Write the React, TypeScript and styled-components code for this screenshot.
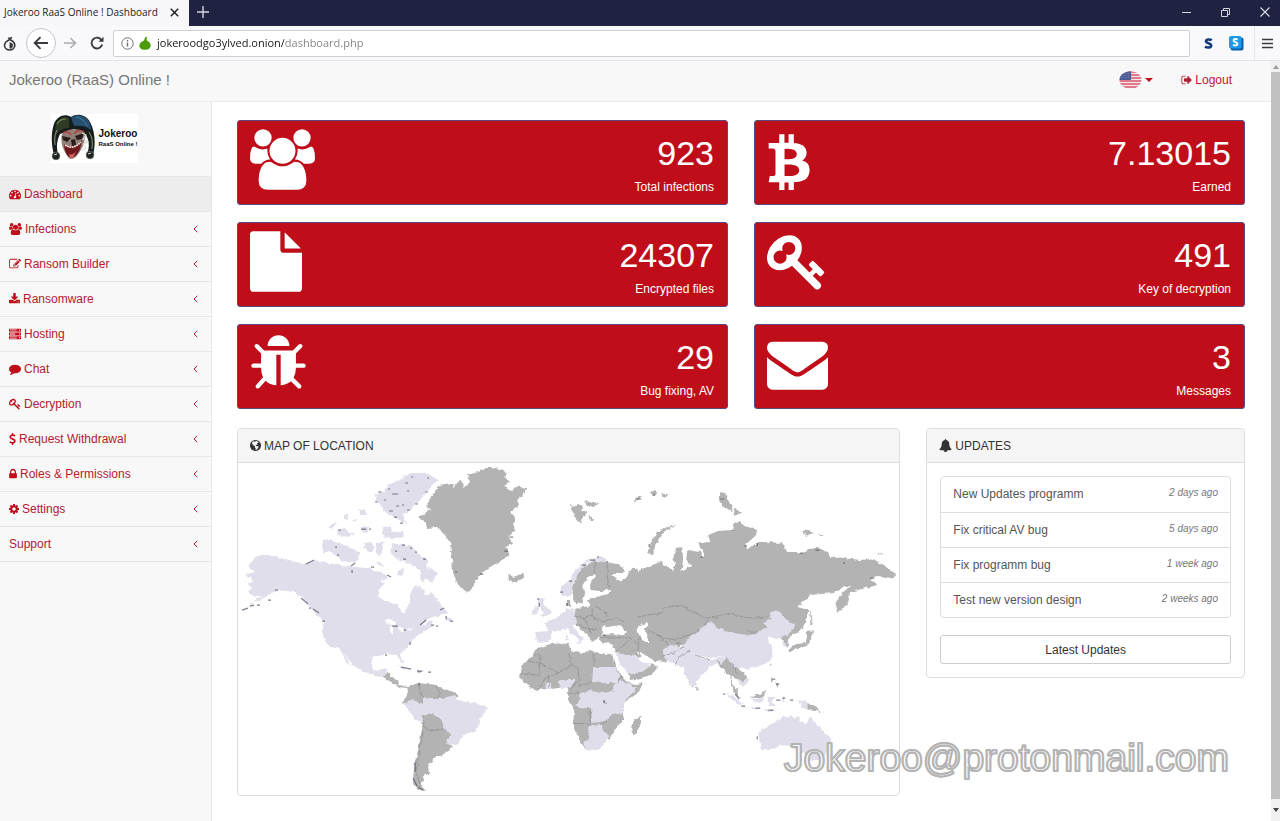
import React from "react";
import styled, { createGlobalStyle } from "styled-components";

const RED = "#bf0d1a";
const LINK = "#b3202f";

const GlobalStyle = createGlobalStyle`
  *, *::before, *::after { box-sizing: border-box; }
  body {
    margin: 0;
    background: #fff;
    color: #333;
    font-family: "Liberation Sans", Arial, sans-serif;
    font-size: 12px;
    line-height: 18px;
  }
  a { text-decoration: none; color: inherit; }
  button, input { font: inherit; }
  ul { list-style: none; margin: 0; padding: 0; }
  h1, h2, p { margin: 0; font-weight: 400; }
`;

/* ---------- icons ---------- */

type Glyph = { x?: number; w: number; d: string };

const glyphs: Record<string, Glyph> = {
  users: {
    x: 64,
    w: 1920,
    d: "M657 896q-162 5-265 128h-134q-82 0-138-40.5t-56-118.5q0-353 124-353 6 0 43.5 21t97.5 42.5 119 21.5q67 0 133-23-5 37-5 66 0 139 81 256zm1071 637q0 120-73 189.5t-194 69.5h-874q-121 0-194-69.5t-73-189.5q0-53 3.5-103.5t14-109 26.5-108.5 43-97.5 62-81 85.5-53.5 111.5-20q10 0 43 21.5t73 48 107 48 135 21.5 135-21.5 107-48 73-48 43-21.5q61 0 111.5 20t85.5 53.5 62 81 43 97.5 26.5 108.5 14 109 3.5 103.5zm-1024-1277q0 106-75 181t-181 75-181-75-75-181 75-181 181-75 181 75 75 181zm704 384q0 159-112.5 271.5t-271.5 112.5-271.5-112.5-112.5-271.5 112.5-271.5 271.5-112.5 271.5 112.5 112.5 271.5zm576 225q0 78-56 118.5t-138 40.5h-134q-103-123-265-128 81-117 81-256 0-29-5-66 66 23 133 23 59 0 119-21.5t97.5-42.5 43.5-21q124 0 124 353zm-128-609q0 106-75 181t-181 75-181-75-75-181 75-181 181-75 181 75 75 181z",
  },
  bitcoin: {
    x: 256,
    w: 1280,
    d: "M1410 669q18 182-131 258 117 28 175 103t45 214q-7 71-32.5 125t-64.5 89-97 58.5-121.5 34.5-145.5 15v255h-154v-251q-80 0-122-1v252h-154v-255q-18 0-54-.5t-55-.5h-200l31-183h111q50 0 58-51v-402h16q-6-1-16-1v-287q-13-68-89-68h-111v-164l212 1q64 0 97-1v-252h154v247q82-2 122-2v-245h154v252q79 7 140 22.5t113 45 82.5 78 36.5 114.5zm-215 545q0-36-15-64t-37-46-57.5-30.5-65.5-18.5-74-9-69-3-64.5 1-47.5 1v338q8 0 37 .5t48 .5 53-1.5 58.5-4 57-8.5 55.5-14 47.5-21 39.5-30 24.5-40 9.5-51zm-71-476q0-33-12.5-58.5t-30.5-42-48-28-55-16.5-61.5-8-58-2.5-54 1-39.5.5v307q5 0 34.5.5t46.5 0 50-2 55-5.5 51.5-11 48.5-18.5 37-27 27-38.5 9-51z",
  },
  file: {
    x: 128,
    w: 1536,
    d: "M1152 512v-472q22 14 36 28l408 408q14 14 28 36h-472zm-128 32q0 40 28 68t68 28h544v1056q0 40-28 68t-68 28h-1344q-40 0-68-28t-28-68v-1600q0-40 28-68t68-28h800v544z",
  },
  key: {
    w: 1792,
    d: "M832 512q0-80-56-136t-136-56-136 56-56 136q0 42 19 83-41-19-83-19-80 0-136 56t-56 136 56 136 136 56 136-56 56-136q0-42-19-83 41 19 83 19 80 0 136-56t56-136zm851 704q0 17-49 66t-66 49q-9 0-28.5-16t-36.5-33-38.5-40-24.5-26l-96 96 220 220q28 28 28 68 0 42-39 81t-81 39q-40 0-68-28l-671-671q-176 131-365 131-163 0-265.5-102.5t-102.5-265.5q0-160 95-313t248-248 313-95q163 0 265.5 102.5t102.5 265.5q0 189-131 365l355 355 96-96q-3-3-26-24.5t-40-38.5-33-36.5-16-28.5q0-17 49-66t66-49q13 0 23 10 6 6 46 44.5t82 79.5 86.5 86 73 78 28.5 41z",
  },
  bug: {
    x: 64,
    w: 1664,
    d: "M1696 960q0 26-19 45t-45 19h-224q0 171-67 290l208 209q19 19 19 45t-19 45q-18 19-45 19t-45-19l-198-197q-5 5-15 13t-42 28.5-65 36.5-82 29-97 13v-896h-128v896q-51 0-101.5-13.5t-87-33-66-39-43.500-32.500l-15-14-183 207q-20 21-48 21-24 0-43-16-19-18-20.500-44.500t15.500-46.500l202-227q-58-114-58-274h-224q-26 0-45-19t-19-45 19-45 45-19h224v-294l-173-173q-19-19-19-45t19-45 45-19 45 19l173 173h844l173-173q19-19 45-19t45 19 19 45-19 45l-173 173v294h224q26 0 45 19t19 45zm-480-576h-640q0-133 93.500-226.500t226.500-93.500 226.500 93.500 93.500 226.500z",
  },
  envelope: {
    w: 1792,
    d: "M1792 710v794q0 66-47 113t-113 47h-1472q-66 0-113-47t-47-113v-794q44 49 101 87 362 246 497 345 57 42 92.5 65.5t94.5 48 110 24.5h2q51 0 110-24.5t94.5-48 92.5-65.5q170-123 498-345 57-39 100-87zm0-294q0 79-49 151t-122 123q-376 261-468 325-10 7-42.5 31t-54 38-52 32.5-57.5 27-50 9h-2q-23 0-50-9t-57.5-27-52-32.5-54-38-42.5-31q-91-64-262-182.5t-205-142.5q-62-42-117-115.5t-55-136.5q0-78 41.5-130t118.5-52h1472q65 0 112.5 47t47.5 113z",
  },
  dashboard: {
    w: 1792,
    d: "M384 1152q0-53-37.5-90.5t-90.5-37.5-90.5 37.5-37.5 90.5 37.5 90.5 90.5 37.5 90.5-37.5 37.5-90.5zm192-448q0-53-37.5-90.5t-90.5-37.5-90.5 37.5-37.5 90.5 37.5 90.5 90.5 37.5 90.5-37.5 37.5-90.5zm428 481l101-382q6-26-7.5-48.5t-38.5-29.5-48 6.5-30 39.5l-101 382q-60 5-107 43.5t-63 98.5q-20 77 20 146t117 89 146-20 89-117q16-60-6-117t-72-91zm660-33q0-53-37.5-90.5t-90.5-37.5-90.5 37.5-37.5 90.5 37.5 90.5 90.5 37.5 90.5-37.5 37.5-90.5zm-640-640q0-53-37.5-90.5t-90.5-37.5-90.5 37.5-37.5 90.5 37.5 90.5 90.5 37.5 90.5-37.5 37.5-90.5zm448 192q0-53-37.5-90.5t-90.5-37.5-90.5 37.5-37.5 90.5 37.5 90.5 90.5 37.5 90.5-37.5 37.5-90.5zm320 448q0 261-141 483-19 29-54 29h-1402q-35 0-54-29-141-221-141-483 0-182 71-348t191-286 286-191 348-71 348 71 286 191 191 286 71 348z",
  },
  edit: {
    w: 1792,
    d: "M888 1184l116-116-152-152-116 116v56h96v96h56zm440-720q-16-16-33 1l-350 350q-17 17-1 33t33-1l350-350q17-17 1-33zm80 594v190q0 119-84.5 203.5t-203.5 84.5h-832q-119 0-203.5-84.5t-84.5-203.5v-832q0-119 84.5-203.5t203.5-84.5h832q63 0 117 25 15 7 18 23 3 17-9 29l-49 49q-14 14-32 8-23-6-45-6h-832q-66 0-113 47t-47 113v832q0 66 47 113t113 47h832q66 0 113-47t47-113v-126q0-13 9-22l64-64q15-15 35-7t20 29zm-96-738l288 288-672 672h-288v-288zm444 132l-92 92-288-288 92-92q28-28 68-28t68 28l152 152q28 28 28 68t-28 68z",
  },
  download: {
    x: 64,
    w: 1664,
    d: "M1344 1344q0-26-19-45t-45-19-45 19-19 45 19 45 45 19 45-19 19-45zm256 0q0-26-19-45t-45-19-45 19-19 45 19 45 45 19 45-19 19-45zm128-224v320q0 40-28 68t-68 28h-1472q-40 0-68-28t-28-68v-320q0-40 28-68t68-28h465l135 136q58 56 136 56t136-56l136-136h464q40 0 68 28t28 68zm-325-569q17 41-14 70l-448 448q-18 19-45 19t-45-19l-448-448q-31-29-14-70 17-39 59-39h256v-448q0-26 19-45t45-19h256q26 0 45 19t19 45v448h256q42 0 59 39z",
  },
  server: {
    w: 1792,
    d: "M0 128h1792v448h-1792zM128 224v80h1024v-80zM128 400v80h1024v-80zM1500 270v160h160v-160zM0 672h1792v448h-1792zM128 768v80h800v-80zM128 944v80h800v-80zM1500 814v160h160v-160zM0 1216h1792v448h-1792zM128 1312v80h1024v-80zM128 1488v80h1024v-80zM1500 1358v160h160v-160z",
  },
  comment: {
    w: 1792,
    d: "M1792 896q0 174-120 321.5t-326 233-450 85.5q-70 0-145-8-198 175-460 242-49 14-114 22-17 2-30.5-9t-17.5-29v-1q-3-4-.5-12t2-10 4.5-9.5l6-9 7-8.5 8-9q7-8 31-34.5t34.5-38 31-39.5 32.5-51 27-59 26-76q-157-89-247.5-220t-90.5-281q0-130 71-248.5t191-204.5 286-136.5 348-50.5q244 0 450 85.5t326 233 120 321.5z",
  },
  dollar: {
    w: 1024,
    d: "M978 1185q0 153-99.5 263.5t-258.5 136.5v175q0 14-9 23t-23 9h-135q-13 0-22.5-9.5t-9.5-22.5v-175q-66-9-127.5-31t-101.5-44.5-74-48-46.5-37.5-17.5-18q-17-21-2-41l103-135q7-10 23-12 15-2 24 9l2 2q113 99 243 125 37 8 74 8 81 0 142.5-43t61.5-122q0-28-15-53t-33.5-42-58.5-37.5-66-32-80-32.5q-39-16-61.5-25t-61.5-26.5-62.5-31-56.5-35.5-53.5-42.5-43.5-49-35.5-58-21-66.5-8.5-78q0-138 98-242t255-134v-180q0-13 9.5-22.5t22.5-9.5h135q14 0 23 9t9 23v176q57 6 110.5 23t87 33.5 63.5 37.5 39 29 15 14q17 18 5 38l-81 146q-8 15-23 16-14 3-27-7-3-3-14.5-12t-39-26.5-58.5-32-74.5-26-85.5-11.5q-95 0-155 43t-60 111q0 26 8.5 48t29.5 41.5 39.5 33 56 31 60.5 27 70 27.5q53 20 81 31.5t76 35 75.5 42.5 62 50 53 63.5 31.5 76.5 13 94z",
  },
  lock: {
    w: 1152,
    d: "M320 768h512v-192q0-106-75-181t-181-75-181 75-75 181v192zm832 96v576q0 40-28 68t-68 28h-960q-40 0-68-28t-28-68v-576q0-40 28-68t68-28h32v-192q0-184 132-316t316-132 316 132 132 316v192h32q40 0 68 28t28 68z",
  },
  cog: {
    x: 128,
    w: 1536,
    d: "M1152 896q0-106-75-181t-181-75-181 75-75 181 75 181 181 75 181-75 75-181zm512-109v222q0 12-8 23t-20 13l-185 28q-19 54-39 91 35 50 107 138 10 12 10 25t-9 23q-27 37-99 108t-94 71q-12 0-26-9l-138-108q-44 23-91 38-16 136-29 186-7 28-36 28h-222q-14 0-24.5-8.5t-11.5-21.5l-28-184q-49-16-90-37l-141 107q-10 9-25 9-14 0-25-11-126-114-165-168-7-10-7-23 0-12 8-23 15-21 51-66.5t54-70.5q-27-50-41-99l-183-27q-13-2-21-12.5t-8-23.5v-222q0-12 8-23t19-13l186-28q14-46 39-92-40-57-107-138-10-12-10-24 0-10 9-23 26-36 98.5-107.5t94.5-71.5q13 0 26 10l138 107q44-23 91-38 16-136 29-186 7-28 36-28h222q14 0 24.5 8.5t11.5 21.5l28 184q49 16 90 37l142-107q9-9 24-9 13 0 25 10 129 119 165 170 7 8 7 22 0 12-8 23-15 21-51 66.5t-54 70.5q26 50 41 98l183 28q13 2 21 12.5t8 23.5z",
  },
  signOut: {
    w: 1664,
    d: "M704 1440q0 4 1 20t.5 26.5-3 23.5-10 19.5-20.5 6.5h-320q-119 0-203.5-84.5t-84.5-203.5v-704q0-119 84.5-203.5t203.5-84.5h320q13 0 22.5 9.5t9.5 22.5q0 4 1 20t.5 26.5-3 23.5-10 19.5-20.5 6.5h-320q-66 0-113 47t-47 113v704q0 66 47 113t113 47h312l11.5 1 11.5 3 8 5.5 7 9 2 13.5zm928-544q0 26-19 45l-544 544q-19 19-45 19t-45-19-19-45v-288h-448q-26 0-45-19t-19-45v-384q0-26 19-45t45-19h448v-288q0-26 19-45t45-19 45 19l544 544q19 19 19 45z",
  },
  bell: {
    w: 1792,
    d: "M912 1696q0-16-16-16-59 0-101.5-42.5t-42.5-101.5q0-16-16-16t-16 16q0 73 51.5 124.5t124.5 51.5q16 0 16-16zm816-288q0 52-38 90t-90 38h-448q0 106-75 181t-181 75-181-75-75-181h-448q-52 0-90-38t-38-90q50-42 91-88t85-119.5 74.5-158.5 50-206 19.5-260q0-152 117-282.5t307-158.5q-8-19-8-39 0-40 28-68t68-28 68 28 28 68q0 20-8 39 190 28 307 158.5t117 282.5q0 139 19.5 260t50 206 74.5 158.5 85 119.5 91 88z",
  },
  globe: {
    w: 1536,
    d: "M768 128a768 768 0 1 0 .1 0zM880 270q230 50 340 230l-90 60-120-30-70 90 110 40-40 130-170 20-60 130 180 60 170-30 70 80-90 230-140 160q-120 40-220 30l60-180-130-120 20-160-150-90-210-190-60-200q40-120 140-200l120-40 60 70 130-20z",
  },
};

const GlyphSvg = styled.svg`
  display: block;
  flex: none;
  fill: currentColor;
`;

function Icon({ name, size }: { name: string; size: number }) {
  const g = glyphs[name];
  return (
    <GlyphSvg
      viewBox={`${g.x ?? 0} 0 ${g.w} 1792`}
      height={size}
      width={Math.round((g.w / 1792) * size)}
      fillRule="evenodd"
      aria-hidden="true"
    >
      <path d={g.d} />
    </GlyphSvg>
  );
}

/* ---------- browser chrome ---------- */

const Shell = styled.div`
  display: flex;
  flex-direction: column;
  min-height: 100vh;
`;

const TabStrip = styled.div`
  display: flex;
  align-items: stretch;
  height: 26px;
  background: #1f2240;
  color: #d5d6de;
`;

const Tab = styled.div`
  display: flex;
  align-items: center;
  justify-content: space-between;
  width: 189px;
  padding: 0 9px 2px 4px;
  background: #f7f7fa;
  color: #1c1c22;
  font-family: "Open Sans", sans-serif;
  font-size: 10px;
  white-space: nowrap;
`;

const ChromeButton = styled.button<{ $w?: number }>`
  display: flex;
  align-items: center;
  justify-content: center;
  width: ${(p) => p.$w ?? 28}px;
  padding: 0;
  border: 0;
  background: none;
  color: inherit;
`;

const TabStripButton = styled(ChromeButton)`
  padding-bottom: 2px;
`;

const WindowButtons = styled.div`
  display: flex;
  gap: 8px;
  margin-left: auto;
`;

const Stroke = styled.svg`
  display: block;
  flex: none;
  fill: none;
  stroke: currentColor;
`;

const Toolbar = styled.div`
  display: flex;
  align-items: center;
  height: 35px;
  border-bottom: 1px solid #e3e3e8;
  background: #f9f9fb;
  color: #3a3a40;
`;

const BackButton = styled(ChromeButton)`
  height: 30px;
  margin-left: 6px;
  border: 1px solid #c5c5c9;
  border-radius: 50%;
  background: #fff;
`;

const AddressBar = styled.div`
  display: flex;
  flex: 1;
  align-items: center;
  gap: 5px;
  height: 27px;
  margin: 0 4px 0 2px;
  padding: 0 7px;
  border: 1px solid #cfcfd4;
  border-radius: 2px;
  background: #fff;
`;

const AddressInput = styled.input`
  flex: 1;
  min-width: 0;
  padding: 0 0 0 1px;
  border: 0;
  outline: 0;
  background: linear-gradient(90deg, #15151a 128px, #808086 128px);
  -webkit-background-clip: text;
  background-clip: text;
  color: transparent;
  font-family: "Open Sans", sans-serif;
  font-size: 11px;
  line-height: 18px;
`;

const ToolbarEnd = styled.div`
  display: flex;
  align-items: center;
  align-self: stretch;
`;

const MenuDivider = styled.span`
  align-self: stretch;
  width: 1px;
  margin-left: 4px;
  background: #e6e6ea;
`;

function BrowserChrome() {
  return (
    <>
      <TabStrip>
        <Tab>
          Jokeroo RaaS Online ! Dashboard
          <ChromeButton $w={12} aria-label="Close tab">
            <Stroke width="9" height="9" viewBox="0 0 9 9" strokeWidth="1.4">
              <path d="M.8.8l7.4 7.4M8.2.8L.8 8.2" />
            </Stroke>
          </ChromeButton>
        </Tab>
        <TabStripButton aria-label="New tab">
          <Stroke width="12" height="12" viewBox="0 0 12 12" strokeWidth="1.4">
            <path d="M6 0v12M0 6h12" />
          </Stroke>
        </TabStripButton>
        <WindowButtons>
          <TabStripButton $w={31} aria-label="Minimize">
            <Stroke width="9" height="9" viewBox="0 0 9 9">
              <path d="M0 4.5h9" />
            </Stroke>
          </TabStripButton>
          <TabStripButton $w={31} aria-label="Restore">
            <Stroke width="9" height="9" viewBox="0 0 9 9">
              <path d="M.5 2.5h6v6h-6zM2.5 2.5v-2h6v6h-2" />
            </Stroke>
          </TabStripButton>
          <TabStripButton $w={31} aria-label="Close window">
            <Stroke width="10" height="10" viewBox="0 0 10 10" strokeWidth="1.2">
              <path d="M.5.5l9 9M9.5.5l-9 9" />
            </Stroke>
          </TabStripButton>
        </WindowButtons>
      </TabStrip>
      <Toolbar>
        <ChromeButton $w={20} aria-label="Onion circuit">
          <Stroke width="14" height="15" viewBox="0 0 14 15" strokeWidth="1.7">
            <path d="M5.500 1.500l1.300 2C3.500 5 1.500 6.600 1.500 9.300c0 2.700 2.300 4.700 5.100 4.700s5.200-2 5.200-4.700c0-2.700-2-4.300-4.600-5.600L8.500 1" />
            <path d="M6.800 6.500v5.800c2.200 0 3-1.300 3-2.900s-1-2.400-3-2.900z" fill="currentColor" strokeWidth=".5" />
          </Stroke>
        </ChromeButton>
        <BackButton $w={30} aria-label="Back">
          <Stroke width="16" height="14" viewBox="0 0 16 14" strokeWidth="1.9">
            <path d="M15 7H2M7.500 1.200L1.700 7l5.800 5.800" />
          </Stroke>
        </BackButton>
        <ChromeButton $w={27} disabled aria-label="Forward">
          <Stroke width="14" height="14" viewBox="0 0 16 14" strokeWidth="1.7" opacity=".4">
            <path d="M1 7h13M8.500 1.200L14.300 7l-5.800 5.800" />
          </Stroke>
        </ChromeButton>
        <ChromeButton $w={28} aria-label="Reload">
          <Stroke width="14" height="14" viewBox="0 0 14 14" strokeWidth="1.9">
            <path d="M11.900 4.800A5.400 5.400 0 1 0 12.200 8.500" />
            <path d="M13.500.8v5h-5z" fill="currentColor" stroke="none" />
          </Stroke>
        </ChromeButton>
        <AddressBar>
          <Stroke width="13" height="13" viewBox="0 0 13 13" color="#6f6f75">
            <circle cx="6.500" cy="6.500" r="5.700" />
            <path d="M6.500 5.500v4M6.500 3v1.400" strokeWidth="1.400" />
          </Stroke>
          <svg width="12" height="13" viewBox="0 0 12 13" fill="#4a9a0a">
            <path d="M6.200.3L8 0 7.500 3.200C10 4.500 11.700 6.300 11.700 8.500c0 2.800-2.500 4.300-5.700 4.300S.3 11.300.3 8.500C.3 6.200 2.500 4.800 5 3.500z" />
          </svg>
          <AddressInput aria-label="Address" defaultValue="jokeroodgo3ylved.onion/dashboard.php" />
        </AddressBar>
        <ToolbarEnd>
          <ChromeButton aria-label="NoScript">
            <svg width="9" height="11" viewBox="0 0 9 11" fill="none" stroke="#123a7d" strokeWidth="2.600">
              <path d="M7.800 2.200C6.500 1.300 2 .8 2 3.300c0 2.300 5.200 1.500 5.200 4.200 0 2.600-4.500 2.300-6.200 1.200" />
            </svg>
          </ChromeButton>
          <ChromeButton aria-label="HTTPS Everywhere">
            <svg width="15" height="15" viewBox="0 0 15 15">
              <rect x="1.500" y="1.500" width="13" height="13" rx="2" fill="#0d5fae" />
              <rect width="12.500" height="12.500" rx="2" fill="#1b9bea" />
              <path d="M8.700 3.500C7.500 2.800 4.500 2.600 4.500 4.500s4 1.300 4 3.300-3 1.900-4.400 1.100" fill="none" stroke="#fff" strokeWidth="1.900" />
            </svg>
          </ChromeButton>
          <MenuDivider />
          <ChromeButton $w={25} aria-label="Open menu">
            <Stroke width="11" height="11" viewBox="0 0 11 11" strokeWidth="1.600">
              <path d="M0 1.500h11M0 5.500h11M0 9.500h11" />
            </Stroke>
          </ChromeButton>
        </ToolbarEnd>
      </Toolbar>
    </>
  );
}

/* ---------- page frame ---------- */

const Viewport = styled.div`
  display: flex;
  flex: 1;
`;

const Page = styled.div`
  position: relative;
  display: flex;
  flex: 1;
  flex-direction: column;
  min-width: 0;
`;

const ScrollTrack = styled.div`
  display: flex;
  flex-direction: column;
  width: 9px;
  background: #f1f1f1;
`;

const ScrollArrow = styled.span<{ $down?: boolean }>`
  display: flex;
  align-items: center;
  justify-content: center;
  height: ${(p) => (p.$down ? 22 : 11)}px;

  &::before {
    content: "";
    border: 3px solid transparent;
    border-top-width: ${(p) => (p.$down ? 4 : 0)}px;
    border-bottom-width: ${(p) => (p.$down ? 0 : 4)}px;
    border-top-color: #444;
    border-bottom-color: #9a9a9a;
  }
`;

const ScrollThumb = styled.span`
  flex: 1;
  background: #c1c1c1;
`;

const Header = styled.header`
  display: flex;
  align-items: center;
  height: 41px;
  padding: 0 39px 2px 9px;
  border-bottom: 1px solid #e9e9e9;
  background: #f8f8f8;
`;

const Brand = styled.a`
  margin-right: auto;
  color: #777;
  font-size: 15px;
`;

const HeaderLinks = styled.nav`
  display: flex;
  align-items: center;
  gap: 28px;
  color: ${LINK};
`;

const LanguageButton = styled.button`
  display: flex;
  align-items: center;
  gap: 3px;
  padding: 0;
  border: 0;
  background: none;
`;

const Caret = styled.span`
  border: 4px solid transparent;
  border-top-color: ${RED};
  border-bottom: 0;
`;

const IconLink = styled.a`
  display: flex;
  align-items: center;
  gap: 3px;
`;

const Columns = styled.div`
  display: flex;
  flex: 1;
`;

const Sidebar = styled.aside`
  width: 212px;
  flex: none;
  border-right: 1px solid #e7e7e7;
  background: #f8f8f8;
`;

const LogoBox = styled.div`
  display: flex;
  align-items: flex-start;
  justify-content: center;
  height: 75px;
  padding: 12px 22px 0 0;
  border-bottom: 1px solid #e7e7e7;
`;

const Logo = styled.a`
  display: flex;
  align-items: center;
  gap: 2px;
  height: 49px;
  background: #fff;
  color: #111;
`;

const LogoText = styled.span`
  display: flex;
  flex-direction: column;
  align-items: center;
  font-weight: 700;
`;

const LogoName = styled.span`
  font-size: 10px;
  line-height: 12px;
`;

const LogoTag = styled.span`
  font-size: 6px;
  line-height: 9px;
`;

const NavLink = styled.a<{ $active?: boolean }>`
  display: flex;
  align-items: center;
  gap: 3px;
  height: 35px;
  padding: 0 13px 0 9px;
  border-bottom: 1px solid #e7e7e7;
  background: ${(p) => (p.$active ? "#ededed" : "transparent")};
  color: ${LINK};

  & > svg:first-child { color: ${RED}; }
`;

const Chevron = styled(Stroke)`
  margin-left: auto;
`;

const navItems = [
  { label: "Dashboard", icon: "dashboard", active: true },
  { label: "Infections", icon: "users" },
  { label: "Ransom Builder", icon: "edit" },
  { label: "Ransomware", icon: "download" },
  { label: "Hosting", icon: "server" },
  { label: "Chat", icon: "comment" },
  { label: "Decryption", icon: "key" },
  { label: "Request Withdrawal", icon: "dollar" },
  { label: "Roles & Permissions", icon: "lock" },
  { label: "Settings", icon: "cog" },
  { label: "Support" },
];

function Flag() {
  return (
    <svg width="23" height="18" viewBox="0 0 23 18" role="img" aria-label="English">
      <clipPath id="flag-oval">
        <ellipse cx="11.500" cy="9" rx="11" ry="8.800" />
      </clipPath>
      <g clipPath="url(#flag-oval)">
        <rect width="23" height="18" fill="#f6e6ea" />
        <path d="M0 1h23M0 4h23M0 7h23M0 10h23M0 13h23M0 16h23" stroke="#d6566c" strokeWidth="1.500" />
        <rect width="12" height="9" fill="#4a5a96" />
        <path d="M2 2.500h9M2 4.500h9M2 6.500h9" stroke="#8c98c2" strokeWidth=".7" strokeDasharray="1 1.300" />
      </g>
    </svg>
  );
}

function Jester() {
  return (
    <svg width="45" height="49" viewBox="0 0 45 49" aria-hidden="true">
      <path d="M3 41C0 30 0 18 3 10 6 2 14-1 20 3c5-4 15-3 19 5 5 9 6 22 3 33l-6-1c3-8 2-14-1-19L23 15 9 20c-3 6-4 13-2 20z" fill="#161d1c" />
      <path d="M20 3c6-3 13-2 17 3 2 3 3 6 3 10-5-4-10-5-17-4z" fill="#27506f" />
      <path d="M25 3c5 1 9 4 11 9" stroke="#4680a5" strokeWidth="1" fill="none" />
      <path d="M18 4C12 1 7 5 5 11c-1 4-1 7 0 10 3-5 7-7 13-7z" fill="#2f3a25" />
      <path d="M6 10c2-4 5-5 9-5M4 31c-1-6 0-11 2-15M38 18c3 4 4 10 3 17" stroke="#7c8758" strokeWidth="1.200" fill="none" />
      <path d="M11 20c4-5 18-7 23-1 1 7-2 14-6 20-3 5-8 8-11 4-5-7-8-15-6-23z" fill="#8f7f77" />
      <path d="M11 22l9 2-4 4-4-2zM24 22l9-3-2 6-5 1zM20 26l4-1 1 6-4 1z" fill="#2b1a1a" />
      <path d="M12 19c3-2 6-1 8 2M23 20c3-4 7-4 10-2" stroke="#b8403f" strokeWidth="1.500" fill="none" />
      <path d="M13 30c5 5 13 3 18-4-1 9-5 17-11 18-4-1-7-8-7-14z" fill="#6e171d" />
      <path d="M14 31c6 4 11 2 16-3" stroke="#eadfd4" strokeWidth="1.700" strokeDasharray="1.800 .6" fill="none" />
      <path d="M18 40c3 1 5 0 7-3l-3 7-3 1z" fill="#d06161" />
      <path d="M31 19l4 2-3 4 5 3-5 2 3 4-4 2" stroke="#dedad2" strokeWidth="1.200" fill="none" />
      <g fill="#1c2422" stroke="#5e6558" strokeWidth=".8">
        <circle cx="5" cy="42" r="3.800" />
        <circle cx="39" cy="41" r="3.800" />
      </g>
      <path d="M3 41l3-1M37 40l3-1" stroke="#d9d9cf" strokeWidth="1" />
    </svg>
  );
}

/* ---------- dashboard ---------- */

const Main = styled.main`
  display: grid;
  grid-template-columns: repeat(12, minmax(0, 1fr));
  flex: 1;
  align-content: start;
  align-items: start;
  gap: 17px 26px;
  min-width: 0;
  padding: 18px 26px 24px 25px;
`;

const StatCard = styled.section`
  display: flex;
  grid-column: span 6;
  align-items: flex-start;
  justify-content: space-between;
  height: 85px;
  padding: 8px 13px 0 12px;
  border: 1px solid #5a4a80;
  border-radius: 3px;
  background: ${RED};
  color: #fff;
`;

const StatFigures = styled.div`
  text-align: right;
`;

const StatValue = styled.p`
  font-size: 34px;
  line-height: 48px;
`;

const StatLabel = styled.p`
  line-height: 20px;
`;

const Panel = styled.section<{ $span: number }>`
  grid-column: span ${(p) => p.$span};
  margin-top: 2px;
  border: 1px solid #ddd;
  border-radius: 4px;
  background: #fff;
  overflow: hidden;
`;

const PanelTitle = styled.h2`
  display: flex;
  align-items: center;
  gap: 3px;
  height: 34px;
  padding: 0 12px;
  border-bottom: 1px solid #ddd;
  background: #f5f5f5;
  font-size: 12px;
`;

const PanelBody = styled.div`
  padding: 13px;
`;

const UpdateList = styled.ul`
  margin-bottom: 17px;
  border: 1px solid #ddd;
  border-radius: 4px;
`;

const UpdateItem = styled.li`
  display: flex;
  justify-content: space-between;
  height: 35px;
  padding: 8px 12px;
  color: #555;

  & + & { border-top: 1px solid #ddd; }
`;

const UpdateTime = styled.em`
  color: #777;
  font-size: 10px;
  line-height: 15px;
`;

const WideButton = styled.button`
  display: block;
  width: 100%;
  height: 29px;
  padding: 0;
  border: 1px solid #ccc;
  border-radius: 3px;
  background: #fff;
  color: #333;
`;

const ContactMark = styled.p`
  position: absolute;
  right: 42px;
  bottom: 40px;
  color: #fff;
  font-size: 39px;
  line-height: 46px;
  -webkit-text-stroke: 2px #b4b4b4;
  text-shadow: 1px 0 #b4b4b4, -1px 0 #b4b4b4, 0 1px #b4b4b4, 0 -1px #b4b4b4;
  pointer-events: none;
`;

const MapSvg = styled.svg`
  display: block;
  width: 100%;
  height: auto;
`;

const greyLand = [
  // Greenland, Iceland
  "M418 517L430 510 426 506 430 498 438 487 445 484 452 483 453 488 460 480 464 487 470 482 467 475 478 472 490 467 500 469 507 473 504 477 510 482 504 486 512 492 515 486 527 488 524 494 517 500 519 505 510 513 516 519 513 524 515 530 508 537 512 544 505 547 510 555 497 563 488 568 480 575 476 580 473 587 468 593 460 587 456 580 453 573 452 560 450 543 443 532 436 527 427 528 424 521z",
  "M508 575L513 577 523 573 524 578 513 583 509 580z",
  // Russia, Scandinavia, central and western Asia
  "M595 560L607 562 616 564 623 568 625 573 615 573 612 575 620 581 626 578 630 571 633 567 638 571 647 567 660 562 667 566 673 570 675 566 673 558 675 548 682 547 683 560 681 571 687 568 692 566 686 560 687 550 700 552 703 558 704 554 698 543 710 542 708 535 718 531 732 530 734 524 740 521 744 526 757 530 755 536 745 545 748 548 757 543 763 542 783 543 787 553 802 553 808 549 817 548 828 552 829 557 845 558 860 560 870 559 883 565 897 575 890 579 878 576 870 580 877 585 862 589 850 592 848 602 838 613 835 603 843 592 850 586 842 587 833 593 810 595 797 607 808 610 806 623 798 632 787 638 789 646 785 647 783 640 770 630 740 640 700 645 680 645 666 662 655 661 648 657 637 650 642 657 637 658 626 655 615 653 613 645 607 643 600 642 600 637 592 642 587 635 580 629 573 622 573 612 577 608 590 606 588 600 595 597 608 594 610 590 600 591 590 590 590 583 596 576 594 574 588 577 582 587 584 592 583 597 581 603 576 604 573 597 572 587 578 572 585 566z",
  "M566 601L570 601 570 606 566 606z",
  // Arctic islands
  "M675 526L663 532 658 540 655 545 653 555 647 553 650 545 652 540 660 530 672 525z",
  "M570 505L575 506 578 504 583 507 581 511 587 512 583 518 580 525 575 517 572 512zM585 500L592 502 599 503 593 508 586 505zM588 514L593 520 590 521z",
  "M720 493L727 495 727 501 732 505 732 511 723 507 719 501zM735 508L742 513 733 516zM802 531L808 530 813 533 806 536zM818 534L824 536 819 536zM634 498L643 496 638 500 635 501zM650 492L655 490 657 495 651 496zM660 494L669 494 664 497zM877 554L883 553 880 555z",
  // Japan, Korea, Sakhalin
  "M788 650L796 644 805 643 807 636 806 631 815 630 811 634 809 643 804 647 796 648 789 652zM810 610L812 618 812 625 810 625z",
  // Southeast Asia and Papua
  "M720 665L727 657 732 663 737 667 743 672 747 677 743 682 735 678 731 675 732 684 737 690 740 699 735 694 731 686 730 675 726 674zM750 697L757 695 766 690 765 696 757 698zM807 703L817 707 819 711 824 713 815 711 807 710zM770 676L773 680 771 683zM775 682L779 684 777 688zM770 662L772 666 770 666zM696 687L698 690 696 691z",
  // Yemen, Oman
  "M628 674L638 673 648 668 652 663 658 667 655 671 650 675 641 678 630 680z",
  // Africa
  "M537 648L550 644 568 643 570 650 583 653 590 650 600 654 612 654 613 658 615 667 622 675 629 683 636 685 643 683 641 689 635 695 625 702 622 708 624 720 615 728 614 732 609 737 600 748 592 750 585 749 578 737 573 723 574 710 568 700 568 690 565 686 558 688 550 689 543 688 537 691 527 685 520 678 522 665 527 661 532 655z",
  "M640 716L641 722 637 732 632 734 631 727 633 722z",
  // Central and northern South America, Caribbean
  "M382 677L387 673 390 673 390 677 397 680 398 685 408 687 418 683 428 684 437 685 440 688 457 693 457 697 440 698 423 700 424 705 413 700 403 704 405 697 408 692 407 688 398 687 393 683zM396 665L404 668 408 669 402 668zM417 670L424 671 418 672zM428 672L431 672z",
  // Bolivia, Paraguay, Argentina, Chile
  "M423 715L430 713 440 718 444 727 451 735 447 741 453 747 448 750 442 755 433 758 432 762 428 766 429 773 424 776 422 782 422 787 427 790 418 790 413 783 413 777 414 769 415 760 418 750 420 740 422 728zM441 783L443 783z",
];

const lightLand = [
  // Alaska, Canada, United States, Mexico
  "M248 565L255 558 265 555 278 557 295 562 303 564 315 560 328 563 342 566 353 567 368 568 374 571 382 572 388 577 380 582 385 583 378 590 378 597 388 602 398 604 402 612 404 614 406 610 408 605 410 603 410 595 412 590 415 585 422 588 424 593 427 595 432 592 437 600 443 607 448 613 438 616 432 617 427 620 420 627 432 620 433 626 427 630 422 633 415 637 411 643 402 652 400 655 403 663 401 663 397 655 385 654 379 656 373 657 371 664 373 670 377 671 382 669 387 669 386 674 382 677 375 676 368 673 358 669 354 666 350 662 343 653 337 648 330 647 324 640 322 632 324 622 319 617 315 613 308 605 302 597 293 592 278 590 272 593 260 600 250 605 242 610 262 596 255 597 248 592 252 587 248 585 254 580 245 575 255 572 250 569z",
  "M341 652L346 658 350 665 347 663zM446 617L450 618 452 622 446 621z",
  // Canadian Arctic
  "M420 473L430 475 438 480 431 486 427 492 422 496 417 503 412 508 407 513 402 514 407 523 400 520 393 517 388 514 383 510 380 504 375 500 375 496 378 493 384 491 388 485 395 482 403 477 412 473z",
  "M383 527L390 526 392 532 403 532 404 537 392 538 383 536z",
  "M323 540L330 539 337 542 344 545 350 547 353 549 360 553 358 561 353 562 342 562 337 556 330 552 323 552 322 546z",
  "M337 530L345 528 348 532 355 535 347 537 338 535zM358 509L364 509 367 515 361 515zM327 528L335 522 337 524 331 529zM344 516L349 514 348 519 344 519zM362 527L370 527 367 533 361 531zM352 520L357 519 355 522z",
  "M364 543L372 542 374 550 368 552 364 548zM376 543L383 541 384 548 379 556 375 551zM376 561L381 563 385 567 378 565z",
  "M393 543L400 545 410 545 417 552 427 560 427 568 431 573 437 573 432 583 426 578 422 584 420 575 420 570 414 566 407 563 401 560 393 557 390 551zM398 570L404 568 403 576 397 574zM427 566L437 572 433 577z",
  // Peru and Brazil
  "M403 704L413 699 418 703 423 704 423 697 440 699 455 695 458 700 466 702 477 703 487 708 485 713 479 720 478 727 475 732 463 735 460 740 457 745 447 743 450 735 444 727 440 718 430 713 423 715 423 722 416 720 412 716 407 708z",
  // Norway, British Isles, western Europe
  "M560 587L570 580 573 573 580 565 588 560 597 557 602 556 608 560 602 562 595 561 587 563 580 570 576 577 572 585 572 593 567 597 561 595z",
  "M538 598L545 598 543 605 548 608 552 613 546 616 540 616 543 612 539 606zM532 612L535 607 539 608 537 614 532 615z",
  "M562 613L566 609 573 608 575 617 577 623 573 626 576 630 583 638 580 643 578 639 571 634 567 628 560 630 552 632 550 640 543 643 537 642 535 632 548 631 545 623 553 620zM566 632L569 640 566 640zM576 642L581 643 578 645z",
  // Arabia
  "M615 653L626 655 637 656 641 663 650 663 648 668 638 673 628 674 620 664z",
  // Sudan, East and Central Africa, South Africa, Nigeria
  "M593 667L615 667 620 676 618 683 603 683 592 682zM580 693L590 690 600 693 613 692 613 686 619 680 630 684 637 688 628 697 625 702 622 708 623 713 612 715 608 720 600 722 592 723 591 708 580 708 574 706 580 700zM588 726L600 725 603 731 608 733 609 737 600 748 592 750 585 749 583 741 588 740zM558 680L575 680 570 688 560 688zM545 684L551 683 551 689 546 689z",
  // China
  "M686 642L690 636 698 632 702 625 706 625 710 621 714 624 717 628 728 632 740 634 750 635 757 633 761 629 768 628 763 623 770 618 770 612 778 611 782 614 785 620 795 625 791 632 787 635 778 638 774 640 768 637 768 641 771 645 772 650 772 657 768 662 757 667 748 668 748 671 744 668 733 667 730 660 725 657 710 658 695 655 692 647z",
  "M782 641L786 644 786 648 783 647z",
  // India, Pakistan, Afghanistan
  "M680 647L686 642 692 645 695 655 703 659 712 659 727 657 722 662 720 667 717 663 708 668 702 675 697 681 695 686 693 688 690 685 688 680 685 674 683 668 677 665 665 660 662 650 673 643z",
  // Indochina and Indonesia
  "M737 680L743 682 746 678 749 680 747 683 743 686 740 683zM725 692L732 696 738 700 743 705 738 704 731 699zM751 698L757 699 762 696 764 699 760 703 753 701zM742 706L752 708 760 708 752 709zM763 709L770 710 779 709 768 712zM768 697L775 697 771 701 774 706 770 706 767 702zM783 696L784 701 782 701zM788 699L792 700 789 701zM798 700L807 702 807 710 801 707z",
  // Australia
  "M758 732L766 727 773 723 777 720 783 717 787 717 790 715 794 718 800 717 799 721 805 724 808 720 810 715 813 721 817 725 823 731 830 737 831 743 828 751 820 760 814 760 807 757 803 752 799 753 793 747 783 745 774 747 768 750 761 750 760 745z",
];

const whiteWater = [
  "M603 625L608 627 613 626 620 625 627 632 620 636 612 634 601 635z",
  "M640 625L647 623 648 626 643 629 647 634 648 642 643 642 640 635 636 630z",
  "M385 621L392 619 396 623 393 625 387 624zM390 627L393 626 393 634 390 633zM397 625L402 628 405 631 400 632zM408 629L415 627 409 631z",
  "M613 660L619 666 626 676 631 682 627 682 620 673z",
  "M652 660L649 661 642 655z",
];

const borders =
  "M637 617L647 615 662 613 663 608 680 605 693 612 707 618 717 617 730 613 743 617 755 618 767 617M698 632L708 620M648 630L662 637 675 640 688 635 700 630M655 632L668 645 680 643M607 562L607 575 609 588M595 562L594 574M574 616L584 618 592 616 592 608M592 616L602 622 617 618 624 622M577 624L590 630 600 628M584 618L592 635M596 606L604 612 608 617M600 637L613 637 630 638 637 645M615 652L624 645 630 638M640 637L637 650M527 661L540 663 558 673 572 665 568 652M594 653L594 667M572 665L578 668 579 680 569 690M522 673L538 675 540 663M558 673L545 678 538 690M533 655L540 656 540 663M548 675L549 688M578 685L592 683M573 723L590 724M590 710L590 724M600 725L610 718M568 693L580 693M423 715L424 725 428 731 436 730 443 728M424 725L419 755 416 770 420 786M418 684L420 692 424 698M437 686L440 697M662 656L674 653 684 646M674 666L680 656 690 650M695 655L710 660M717 660L722 668M618 683L622 675M606 705L603 700M732 663L737 675M748 631L757 633";

const specks =
  "M378 492h3M388 489h2M392 494h6M405 483h3M411 477h2M427 478h2M407 491h2M375 502h3M389 511h4M396 506h3M402 505h2M407 510h3M384 500h2M394 517h3M400 523h3M425 492h3M415 504h3M361 529h5M369 529h2M338 530h3M335 547h2M337 555h2M355 563l-4 3M352 570v3M371 567h3M387 575l4 2M402 545h3M410 548h2M403 559h3M415 552h2M423 559h3M395 551h2M306 564l8-4M242 610l6-2M250 606l4-1M301 598l7 6M309 608h2M313 609l6 4M322 621h3M268 600h3M275 590h3M257 605h3M392 626h6M404 630h2M420 625l6-5M431 625h3M436 626h2M440 610l4-2M446 616v3M450 621h3M410 642v3M385 655h2M401 667l10 2M417 671h5M428 672h3M415 762v10M413 778l4 8M418 787l5 3M418 684h2M455 572h2M480 574h3M504 551h4M510 537h3M582 565h4M590 560h5M597 557h2M569 581h3M560 592h3M539 603v4M537 599h2M567 603v3M649 547v-3M720 499h4M732 530h1M746 546h-2M757 543v3M800 553h3M815 550h4M844 562v2M870 578h4M700 557h3M603 635h3M604 700v3M723 694h2M735 694l4 5M741 706h4M755 708h5M768 710h5M782 698h3M776 700h4M790 700h3M772 679h3M776 684h3M757 736v3M801 751v3M806 757h3M609 737v2M637 499h4M654 496v-2";

function WorldMap() {
  return (
    <MapSvg viewBox="238 463 661 332" role="img" aria-label="Map of location">
      <filter id="coast" x="0" y="0" width="100%" height="100%">
        <feTurbulence type="fractalNoise" baseFrequency="0.22" numOctaves="2" seed="4" />
        <feDisplacementMap in="SourceGraphic" scale="4" xChannelSelector="R" yChannelSelector="G" />
      </filter>
      <g filter="url(#coast)">
        <path d={greyLand.join("")} fill="#b3b3b3" />
        <path d={lightLand.join("")} fill="#e0deeb" />
        <path d={whiteWater.join("")} fill="#fff" />
        <path d={borders} fill="none" stroke="#8d8d8d" strokeWidth=".7" />
      </g>
      <path d={specks} fill="none" stroke="#55556a" strokeWidth="1.200" opacity=".75" />
    </MapSvg>
  );
}

const stats = [
  { icon: "users", value: "923", label: "Total infections" },
  { icon: "bitcoin", value: "7.13015", label: "Earned" },
  { icon: "file", value: "24307", label: "Encrypted files" },
  { icon: "key", value: "491", label: "Key of decryption" },
  { icon: "bug", value: "29", label: "Bug fixing, AV" },
  { icon: "envelope", value: "3", label: "Messages" },
];

const updates = [
  { title: "New Updates programm", time: "2 days ago" },
  { title: "Fix critical AV bug", time: "5 days ago" },
  { title: "Fix programm bug", time: "1 week ago" },
  { title: "Test new version design", time: "2 weeks ago" },
];

export default function App() {
  return (
    <Shell>
      <GlobalStyle />
      <BrowserChrome />
      <Viewport>
        <Page>
          <Header>
            <Brand href="#">Jokeroo (RaaS) Online !</Brand>
            <HeaderLinks>
              <LanguageButton>
                <Flag />
                <Caret />
              </LanguageButton>
              <IconLink href="#logout">
                <Icon name="signOut" size={12} />
                Logout
              </IconLink>
            </HeaderLinks>
          </Header>
          <Columns>
            <Sidebar>
              <LogoBox>
                <Logo href="#">
                  <Jester />
                  <LogoText>
                    <LogoName>Jokeroo</LogoName>
                    <LogoTag>RaaS Online !</LogoTag>
                  </LogoText>
                </Logo>
              </LogoBox>
              <nav>
                <ul>
                  {navItems.map((item) => (
                    <li key={item.label}>
                      <NavLink href="#" $active={item.active}>
                        {item.icon && <Icon name={item.icon} size={12} />}
                        <span>{item.label}</span>
                        {!item.active && (
                          <Chevron width="5" height="8" viewBox="0 0 5 8">
                            <path d="M4.300.8L1 4l3.300 3.200" />
                          </Chevron>
                        )}
                      </NavLink>
                    </li>
                  ))}
                </ul>
              </nav>
            </Sidebar>
            <Main>
              {stats.map((s) => (
                <StatCard key={s.label}>
                  <Icon name={s.icon} size={61} />
                  <StatFigures>
                    <StatValue>{s.value}</StatValue>
                    <StatLabel>{s.label}</StatLabel>
                  </StatFigures>
                </StatCard>
              ))}
              <Panel $span={8}>
                <PanelTitle>
                  <Icon name="globe" size={13} />
                  MAP OF LOCATION
                </PanelTitle>
                <WorldMap />
              </Panel>
              <Panel $span={4}>
                <PanelTitle>
                  <Icon name="bell" size={13} />
                  UPDATES
                </PanelTitle>
                <PanelBody>
                  <UpdateList>
                    {updates.map((u) => (
                      <UpdateItem key={u.title}>
                        {u.title}
                        <UpdateTime>{u.time}</UpdateTime>
                      </UpdateItem>
                    ))}
                  </UpdateList>
                  <WideButton>Latest Updates</WideButton>
                </PanelBody>
              </Panel>
            </Main>
          </Columns>
          <ContactMark>Jokeroo@protonmail.com</ContactMark>
        </Page>
        <ScrollTrack aria-hidden="true">
          <ScrollArrow />
          <ScrollThumb />
          <ScrollArrow $down />
        </ScrollTrack>
      </Viewport>
    </Shell>
  );
}
